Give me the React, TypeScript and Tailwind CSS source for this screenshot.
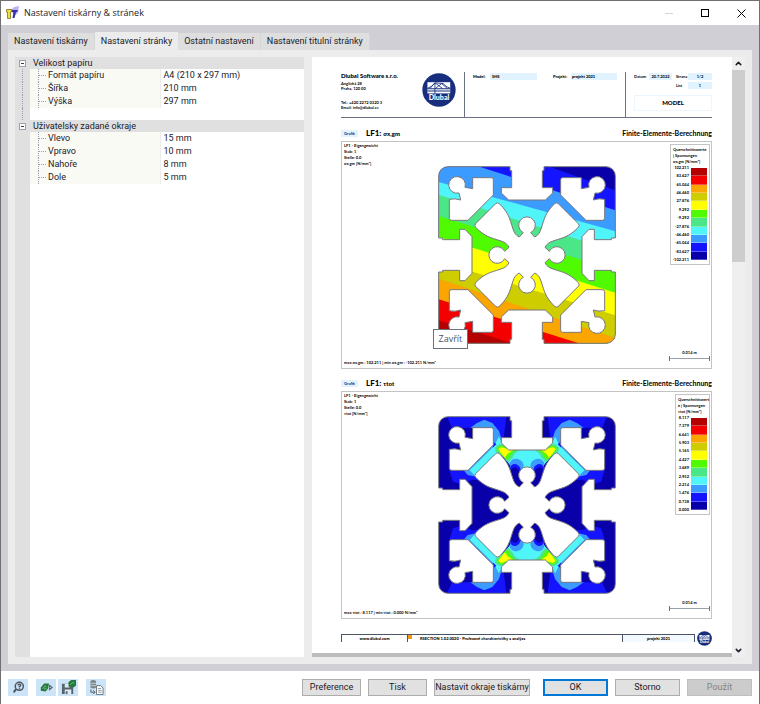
import type { ReactNode } from "react";
import { ChevronDown, ChevronUp } from "lucide-react";

const TABS = ["Nastavení tiskárny", "Nastavení stránky", "Ostatní nastavení", "Nastavení titulní stránky"];

const GROUPS = [
  {
    title: "Velikost papíru",
    rows: [
      ["Formát papíru", "A4 (210 x 297 mm)"],
      ["Šířka", "210 mm"],
      ["Výška", "297 mm"],
    ],
  },
  {
    title: "Uživatelsky zadané okraje",
    rows: [
      ["Vlevo", "15 mm"],
      ["Vpravo", "10 mm"],
      ["Nahoře", "8 mm"],
      ["Dole", "5 mm"],
    ],
  },
];

const COLORS = [
  "#b40000", "#f50000", "#faa500", "#cdcd00", "#ffff00", "#50fa00",
  "#4be687", "#50f5fa", "#3c9bff", "#1414ff", "#0a00aa",
];

const SIGMA = [
  "102.211", "83.627", "65.044", "46.460", "27.876", "9.292",
  "-9.292", "-27.876", "-46.460", "-65.044", "-83.627", "-102.211",
];

const TAU = [
  "8.117", "7.379", "6.641", "5.903", "5.165", "4.427",
  "3.689", "2.952", "2.214", "1.476", "0.738", "0.000",
];

// upper edge of each stress band at the left and right side of the section
const BANDS = [
  { left: -384, right: -194, color: "#1414ff" },
  { left: -304, right: -134, color: "#3c9bff" },
  { left: -219, right: -71, color: "#50f5fa" },
  { left: -181, right: -11, color: "#4be687" },
  { left: -117, right: 46, color: "#50fa00" },
  { left: -54, right: 113, color: "#ffff00" },
  { left: 19, right: 181, color: "#cdcd00" },
  { left: 71, right: 249, color: "#faa500" },
  { left: 133, right: 299, color: "#f50000" },
  { left: 196, right: 361, color: "#b40000" },
];

const MIRRORS = ["scale(1 1)", "scale(-1 1)", "scale(1 -1)", "scale(-1 -1)"];
const TURNS = ["rotate(0)", "rotate(90)", "rotate(180)", "rotate(270)"];

const CENTER_PATH =
  "M-94-154Q-89-159-83-154C-54-126-52-108-43-81Q-37-60-23-54L-11-67A25 25 0 1 1 11-67L23-54Q37-60 43-81C52-108 54-126 83-154Q89-159 94-154" +
  "L154-94Q159-89 154-83C126-54 108-52 81-43Q60-37 54-23L67-11A25 25 0 1 1 67 11L54 23Q60 37 81 43C108 52 126 54 154 83Q159 89 154 94" +
  "L94 154Q89 159 83 154C54 126 52 108 43 81Q37 60 23 54L11 67A25 25 0 1 1-11 67L-23 54Q-37 60-43 81C-52 108-54 126-83 154Q-89 159-94 154" +
  "L-154 94Q-159 89-154 83C-126 54-108 52-81 43Q-60 37-54 23L-67 11A25 25 0 1 1-67-11L-54-23Q-60-37-81-43C-108-52-126-54-154-83Q-159-89-154-94Z";

function Profile({ id, label, children }: { id: string; label: string; children: ReactNode }) {
  return (
    <svg viewBox="-270 -270 540 540" className="h-[180px] w-[180px]" role="img" aria-label={label}>
      <clipPath id={id}>
        <rect x="-265" y="-265" width="530" height="530" rx="28" />
      </clipPath>
      <g clipPath={`url(#${id})`}>
        <rect x="-265" y="-265" width="530" height="530" fill="#0a00aa" />
        {children}
      </g>
      <rect x="-265" y="-265" width="530" height="530" rx="28" fill="none" stroke="#77777e" strokeWidth="3" />
      {TURNS.map((t) => (
        <g key={t} transform={t} fill="#fff">
          <path d="M-51-270V-253H-46V-202H-77V-186L-55-165H55L77-186V-202H46V-253H51V-270Z" />
          <path
            d="M-51-265V-253H-46V-202H-77V-186L-55-165H55L77-186V-202H46V-253H51V-265"
            fill="none"
            stroke="#77777e"
            strokeWidth="3"
          />
        </g>
      ))}
      {MIRRORS.map((t) => (
        <path
          key={t}
          transform={t}
          d="M-163-232H-107Q-101-232-101-226V-180L-177-104H-226Q-233-104-233-110V-167Q-216-171-199-165L-204-186A25 25 0 1 1-186-203L-163-199Z"
          fill="#fff"
          stroke="#77777e"
          strokeWidth="3"
        />
      ))}
      <path d={CENTER_PATH} fill="#fff" stroke="#77777e" strokeWidth="3" />
    </svg>
  );
}

function SigmaPlot() {
  return (
    <Profile id="sigma" label="Sigma x,gm">
      {BANDS.map((b) => (
        <path key={b.left} d={`M-265 ${b.left}L265 ${b.right}V700H-265Z`} fill={b.color} />
      ))}
    </Profile>
  );
}

function TauPlot() {
  return (
    <Profile id="tau" label="Tau tot">
      {MIRRORS.map((t) => (
        <g key={t} transform={t}>
          <path
            d="M-240-265L-225-232L-160-232L-150-200L-95-150L-180-104L-233-104L-222-70L-195-62L-165-76L-135-74L-60-105V-168H-80L-70-200L-62-265Z"
            fill="#1414ff"
          />
          <path
            d="M-170-232L-150-246L-128-256L-104-246L-84-222L-74-190L-60-165L-100-140L-150-84L-178-90L-190-104L-150-130L-100-182L-104-232Z"
            fill="#3c9bff"
          />
          <path d="M-85-205L-76-190L-55-165H0V-108H-44L-54-124L-75-150L-145-76L-172-104L-98-178Z" fill="#50f5fa" />
          <path d="M-52-126Q-44-142-28-138Q-12-134-10-118L-14-104H-48Z" fill="#3c9bff" />
          <path d="M-49-116Q-42-126-32-122Q-22-118-18-106L-22-90H-50Z" fill="#1414ff" />
          <path d="M-47-108Q-38-116-31-112L-22-100L-16-62L-23-50L-50-58Z" fill="#0a00aa" />
          <path d="M-96-172Q-80-190-70-180L-50-167L-18-166Q-38-158-44-142L-56-128L-80-152L-94-160Z" fill="#4be687" />
          <path d="M-90-170Q-78-182-68-176L-50-167H-30Q-48-158-54-140L-62-136L-78-152Z" fill="#50fa00" />
          <path d="M-86-168L-78-174L-56-167L-42-164L-58-154L-66-142L-78-156Z" fill="#ffff00" />
          <path d="M-101-190L-92-182L-103-172Z" fill="#1414ff" />
        </g>
      ))}
    </Profile>
  );
}

function DlubalLogo({ className }: { className: string }) {
  return (
    <svg viewBox="0 0 100 100" className={className} role="img" aria-label="Dlubal">
      <circle cx="50" cy="50" r="49" fill="#172d7d" />
      <rect x="16" y="27" width="67" height="33" fill="#fff" />
      <g fill="none" stroke="#172d7d" strokeWidth="2.5">
        <path d="M16 45Q28 42 38 29L62 31Q72 42 83 45M38 29V60M38 29L60 45M38 29L24 45M58 31L40 45M58 31L75 46" />
        <path d="M16 46H83M16 53H83" strokeWidth="3" />
      </g>
      <text x="50" y="78" textAnchor="middle" fill="#fff" fontSize="21" fontWeight="900" fontFamily="Lato, sans-serif">
        Dlubal
      </text>
    </svg>
  );
}

function Legend({ title, values, width }: { title: ReactNode; values: string[]; width: string }) {
  return (
    <div className={`${width} border border-[#c4c4c4] px-0.5 pt-0.5 pb-px text-[4px] leading-[6px]`}>
      <div className="h-[18px] whitespace-nowrap">{title}</div>
      <div className="flex justify-end gap-0.5">
        <ul className="flex h-[98px] flex-col justify-between text-right leading-[6px]">
          {values.map((v) => (
            <li key={v}>{v}</li>
          ))}
        </ul>
        <div className="mt-[3px] flex h-[92px] w-4 shrink-0 flex-col">
          {COLORS.map((c) => (
            <div key={c} className="flex-1 border-b border-white/30" style={{ backgroundColor: c }} />
          ))}
        </div>
      </div>
    </div>
  );
}

function FigureTitle({ symbol }: { symbol: string }) {
  return (
    <div className="flex h-4 items-center font-bold">
      <span className="w-[17px] bg-[#e1f3ff] text-center text-[4px] leading-[7px] text-[#172d7d]">Grafik</span>
      <h2 className="ml-2 flex-1 text-[8px] leading-[10px] font-black">
        LF1: <span className="text-[6px]">{symbol}</span>
      </h2>
      <span className="text-[7px] leading-[10px]">Finite-Elemente-Berechnung</span>
    </div>
  );
}

type FigureProps = { unit: ReactNode; extremes: ReactNode; legend: ReactNode; children: ReactNode };

function Figure({ unit, extremes, legend, children }: FigureProps) {
  return (
    <div className="relative grid h-[228px] grid-cols-[1fr_auto_1fr] items-center border border-[#c4c4c4] text-[4px] leading-[6px] font-bold">
      <div className="flex h-full w-0 flex-col justify-between pt-px pb-0.5 pl-0.5 whitespace-nowrap">
        <p>
          LF1 - Eigengewicht
          <br />
          Stab: 1<br />
          Stelle: 0.0
          <br />
          {unit}
        </p>
        <p>{extremes}</p>
      </div>
      {children}
      <div className="flex h-full flex-col items-end justify-between pt-0.5 pr-px pb-[7px]">
        {legend}
        <div className="w-[41px] text-center">
          0.014 m
          <div className="flex h-[5px] items-center border-x border-gray-500">
            <div className="h-px w-full bg-gray-400" />
          </div>
        </div>
      </div>
    </div>
  );
}

function Field({ children, className }: { children: ReactNode; className: string }) {
  return <span className={`${className} bg-[#e1f3ff] leading-[7px]`}>{children}</span>;
}

function ReportPage() {
  return (
    <article className="flex-1 bg-white pt-[15px] pr-5 pl-[29px] text-black [font-family:Lato,'Open_Sans',sans-serif]">
      <header className="flex h-[46px] border-b border-gray-500 text-[4px] font-bold">
        <div className="flex w-[124px] justify-between border-r border-gray-500 pr-2">
          <div className="leading-[5px] whitespace-nowrap">
            <div className="mb-0.5 text-[6px] leading-[7px] font-black">Dlubal Software s.r.o.</div>
            Anglická 28
            <br />
            Praha, 120 00
            <div className="mt-[9px]">
              Tel.: +420 2272 0320 3<br />
              Email: info@dlubal.cz
            </div>
          </div>
          <DlubalLogo className="mt-px h-[34px] w-[34px]" />
        </div>
        <div className="flex flex-1 items-start border-r border-gray-500 pt-px pr-2 pl-2 leading-[7px] font-black">
          <span className="w-[17px]">Model:</span>
          <Field className="w-[47px] pl-0.5">SHS</Field>
          <span className="ml-auto w-[18px]">Projekt:</span>
          <Field className="w-[46px] pl-px">projekt 2021</Field>
        </div>
        <div className="w-[86px] pt-px pl-2 leading-[7px]">
          <div className="flex">
            <span className="w-[15px]">Datum</span>
            <Field className="w-[23px] text-center">20.7.2022</Field>
            <span className="ml-1 flex-1">Strana</span>
            <Field className="w-6 text-center">1/2</Field>
          </div>
          <div className="mt-0.5 flex justify-end">
            <span className="w-3">List</span>
            <Field className="w-6 text-center">1</Field>
          </div>
          <div className="mt-1.5 border border-[#edf6fc] text-center text-[6px] leading-[14px] font-black">MODEL</div>
        </div>
      </header>

      <div className="pt-[7px]">
        <FigureTitle symbol="σx,gm" />
        <Figure
          unit="σx,gm [N/mm²]"
          extremes="max σx,gm : 102.211 | min σx,gm : -102.211 N/mm²"
          legend={
            <Legend
              width="w-10"
              values={SIGMA}
              title={<>Querschnittswerte<br />| Spannungen<br />σx,gm [N/mm²]</>}
            />
          }
        >
          <div className="relative">
            <SigmaPlot />
            <div
              role="tooltip"
              className="absolute -bottom-1 -left-1 border border-gray-500 bg-white px-[5px] text-[9px] leading-[18px] font-normal text-gray-600 [font-family:'Open_Sans',sans-serif]"
            >
              Zavřít
            </div>
          </div>
        </Figure>
      </div>

      <div className="pt-1.5">
        <FigureTitle symbol="τtot" />
        <Figure
          unit="τtot [N/mm²]"
          extremes="max τtot : 8.117 | min τtot : 0.000 N/mm²"
          legend={
            <Legend
              width="w-[35px]"
              values={TAU}
              title={<>Querschnittswert<br />e | Spannungen<br />τtot [N/mm²]</>}
            />
          }
        >
          <TauPlot />
        </Figure>
      </div>

      <footer className="flex h-[34px] items-center pt-1 text-[4px] leading-[7px] font-black">
        <div className="flex h-2 flex-1 border-x border-t border-gray-600">
          <a href="#dlubal" className="w-[66px] border-r border-gray-600 text-center">
            www.dlubal.com
          </a>
          <span className="h-1 w-1 bg-[#f09a10]" />
          <span className="flex-1 pl-2">RSECTION 1.02.0020 - Průřezové charakteristiky a analýza</span>
          <span className="w-[72px] border-l border-gray-600 bg-[#f3faff] text-center">projekt 2021</span>
        </div>
        <DlubalLogo className="ml-0.5 h-[15px] w-[15px]" />
      </footer>
      <div className="-mr-5 -ml-[29px] h-1 bg-[#bcbcbc]" />
    </article>
  );
}

function PropertyGrid() {
  return (
    <div className="flex flex-col bg-white">
      <table className="w-full table-fixed border-collapse leading-[13px]">
        <colgroup>
          <col className="w-[15px]" />
          <col className="w-[130px]" />
          <col />
        </colgroup>
        {GROUPS.map((g, i) => (
          <tbody key={g.title}>
            <tr className="h-3 bg-[#e0e0e0] leading-3">
              <td className="p-0">
                <button
                  type="button"
                  aria-label={`Sbalit ${g.title}`}
                  className="mx-auto flex h-[7px] w-[7px] items-center justify-center border border-gray-400 bg-white"
                >
                  <span className="h-px w-[3px] bg-gray-700" />
                </button>
              </td>
              <th colSpan={2} scope="colgroup" className="p-0 pl-[3px] text-left font-normal">
                {g.title}
              </th>
            </tr>
            {g.rows.map(([label, value]) => (
              <tr key={label} className="h-[13px]">
                <td className="h-[13px] bg-[#e0e0e0] p-0">
                  {i === 0 && <div className="ml-[7px] h-[13px] border-l border-dotted border-gray-400" />}
                </td>
                <th scope="row" className="border-r border-[#ececec] bg-[#fafaf5] p-0 text-left font-normal">
                  <div className="flex h-[13px] pl-2">
                    <span className="w-2 border-l border-dotted border-gray-400">
                      <span className="block h-[7px] border-b border-dotted border-gray-400" />
                    </span>
                    <span className="pl-0.5">{label}</span>
                  </div>
                </th>
                <td className="p-0 pl-[3px]">{value}</td>
              </tr>
            ))}
            {i === 0 && (
              <tr>
                <td className="bg-[#e0e0e0] p-0">
                  <div className="ml-[7px] h-3 border-l border-dotted border-gray-400" />
                </td>
                <td colSpan={2} />
              </tr>
            )}
          </tbody>
        ))}
      </table>
      <div className="flex-1 border-l-[15px] border-[#e0e0e0]" />
    </div>
  );
}

function HelpIcon() {
  return (
    <svg viewBox="0 0 16 16" className="h-[13px] w-[13px]" fill="none" aria-hidden="true">
      <circle cx="9" cy="6.5" r="5" stroke="#4d565e" strokeWidth="1.8" />
      <path d="M5 10L2 14" stroke="#4d565e" strokeWidth="2.4" />
      <path d="M7.3 5.4Q7.5 3.9 9.2 3.9Q10.8 4 10.7 5.4Q10.6 6.4 9.1 7V8M9.1 8.8V10" stroke="#4d565e" strokeWidth="1.8" />
    </svg>
  );
}

function UnitsIcon() {
  return (
    <svg viewBox="0 0 16 16" className="h-[13px] w-[13px]" aria-hidden="true">
      <path d="M1 8L5 3H11L10 9L7 13L1 12Z" fill="#237a3c" />
      <path d="M3 10L6 6L8 7M5 10L8 9" stroke="#74c285" strokeWidth="1.2" fill="none" />
      <path d="M11 4L16 8L11 12Z" fill="#5a6269" />
      <path d="M12 7L14 8L12 9Z" fill="#cbe3f7" />
    </svg>
  );
}

function SaveIcon() {
  return (
    <svg viewBox="0 0 16 16" className="h-[15px] w-[15px]" aria-hidden="true">
      <path d="M1 4H12L13 5V15H1Z" fill="#59636b" />
      <path d="M4 4H9V8H4Z M4 10H11V15H4Z" fill="#dcecf8" />
      <path d="M5 12H7V15H5Z" fill="#59636b" />
      <path d="M8 2L11 0H16V6L13 8L8 7Z" fill="#237a3c" />
      <path d="M10 5L12 3H14" stroke="#74c285" fill="none" />
    </svg>
  );
}

function CopyIcon() {
  return (
    <svg viewBox="0 0 16 16" className="h-[15px] w-[15px]" fill="none" aria-hidden="true">
      <path d="M1.500 1Q4.500 -1 7.500 1V8Q4.500 10 1.500 8Z" fill="#7b858c" />
      <path d="M1.500 3.500H7.500M1.500 6H7.500" stroke="#c3d1dc" />
      <path d="M2 10V13H6M4.500 11L6.500 13L4.500 15" stroke="#4d565e" />
      <path d="M8 6H12.500L15 8.500V15.500H8Z" fill="#fff" stroke="#6b747b" />
      <path d="M9.500 9H13M9.500 11H13.500M9.500 13H13.500" stroke="#8b949b" />
    </svg>
  );
}

function DialogButton({ className, disabled, children }: { className: string; disabled?: boolean; children: ReactNode }) {
  return (
    <button type="button" disabled={disabled} className={`h-[17px] whitespace-nowrap ${className}`}>
      {children}
    </button>
  );
}

export default function App() {
  const tool = "flex h-[17px] w-5 items-center justify-center bg-[#cce4f7]";
  const plain = "border border-[#adadad] bg-[#e1e1e1]";

  return (
    <div className="flex min-h-screen flex-col border border-[#707070] bg-white text-[9px] text-[#1b1b28] [font-family:Roboto,'Noto_Sans',sans-serif]">
      <div className="flex h-6 items-center pr-3 pl-[5px]">
        <svg viewBox="0 0 14 14" className="h-[14px] w-[14px]" aria-hidden="true">
          <path d="M5 4L8 1L13 0L12 7L8 10Z" fill="#b9b4f5" />
          <path d="M5.500 4H12L11 6H10L8.500 12H6.500L7.500 6H5.500Z" fill="#3a2fa8" />
          <path d="M0.500 3.500H6L5.500 6H4.500V12.500H1.500V6H0.500Z" fill="#f4df38" stroke="#76701d" strokeWidth="0.8" />
        </svg>
        <h1 className="ml-1 flex-1 text-[9px] [font-family:'Open_Sans','Noto_Sans',sans-serif]">
          Nastavení tiskárny &amp; stránek
        </h1>
        <button type="button" aria-label="Minimalizovat" className="flex h-5 w-9 items-center justify-center">
          <span className="h-px w-2 bg-gray-300" />
        </button>
        <button type="button" aria-label="Maximalizovat" className="flex h-5 w-9 items-center justify-center">
          <span className="h-2 w-2 border border-black" />
        </button>
        <button type="button" aria-label="Zavřít" className="ml-3 flex h-5 w-3 items-center justify-center">
          <svg viewBox="0 0 9 9" className="h-[9px] w-[9px]" stroke="#000" aria-hidden="true">
            <path d="M0.500 0.500L8.500 8.500M8.500 0.500L0.500 8.500" />
          </svg>
        </button>
      </div>

      <main className="flex flex-1 flex-col bg-[#d0cfd5] px-[7px] pt-[7px] pb-[7px]">
        <div role="tablist" className="flex items-end">
          {TABS.map((tab, i) => (
            <button
              key={tab}
              type="button"
              role="tab"
              aria-selected={i === 1}
              className={
                i === 1
                  ? "h-[18px] bg-[#ececec] px-1.5 pt-px"
                  : "h-[17px] border-r border-[#d6d6d8] bg-[#dedede] px-1.5"
              }
            >
              {tab}
            </button>
          ))}
        </div>
        <div className="grid flex-1 grid-cols-[289fr_433fr] gap-2 bg-[#ececec] p-[7px]">
          <PropertyGrid />
          <div className="flex">
            <ReportPage />
            <div className="flex w-[13px] flex-col items-center bg-[#efefef]">
              <button type="button" aria-label="Nahoru" className="flex h-[13px] items-center">
                <ChevronUp size={9} strokeWidth={4} />
              </button>
              <div className="h-[192px] w-full bg-[#cdcdcd]" />
              <button type="button" aria-label="Dolů" className="mt-auto flex h-[13px] items-center">
                <ChevronDown size={9} strokeWidth={4} />
              </button>
            </div>
          </div>
        </div>
      </main>

      <div className="flex h-[33px] items-center px-[7px]">
        <button type="button" aria-label="Nápověda" className={tool}>
          <HelpIcon />
        </button>
        <button type="button" aria-label="Načíst nastavení" className={`${tool} ml-2`}>
          <UnitsIcon />
        </button>
        <button type="button" aria-label="Uložit nastavení" className={`${tool} ml-0.5`}>
          <SaveIcon />
        </button>
        <button type="button" aria-label="Kopírovat" className={`${tool} ml-2`}>
          <CopyIcon />
        </button>
        <div className="ml-auto flex gap-[7px]">
          <DialogButton className={`w-[59px] ${plain}`}>Preference</DialogButton>
          <DialogButton className={`w-[59px] ${plain}`}>Tisk</DialogButton>
          <DialogButton className={`w-24 ${plain}`}>Nastavit okraje tiskárny</DialogButton>
          <DialogButton className="ml-1.5 w-[65px] border-2 border-[#0078d7] bg-[#e1e1e1]">OK</DialogButton>
          <DialogButton className={`w-[65px] ${plain}`}>Storno</DialogButton>
          <DialogButton disabled className="w-[65px] border border-[#bfbfbf] bg-[#cccccc] text-[#858585]">
            Použít
          </DialogButton>
        </div>
      </div>
    </div>
  );
}
